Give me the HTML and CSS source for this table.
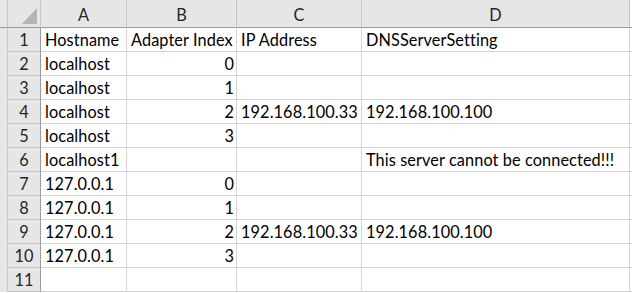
FILE: index.html
```html
<!DOCTYPE html>
<html lang="en">
<head>
    <meta charset="UTF-8">
    <title>Sheet1</title>
    <link rel="stylesheet" href="styles.css">
</head>
<body>
    <div class="sheet">
        <!-- column headers -->
        <div class="cell strip head"></div>
        <div class="cell corner head"><span class="corner-mark"></span></div>
        <div class="cell col-head">A</div>
        <div class="cell col-head">B</div>
        <div class="cell col-head">C</div>
        <div class="cell col-head">D</div>
        <div class="cell rest head"></div>

        <div class="cell strip"></div><div class="cell row-head">1</div>
        <div class="cell">Hostname</div><div class="cell">Adapter Index</div><div class="cell">IP Address</div><div class="cell">DNSServerSetting</div><div class="cell rest"></div>

        <div class="cell strip"></div><div class="cell row-head">2</div>
        <div class="cell">localhost</div><div class="cell num">0</div><div class="cell"></div><div class="cell"></div><div class="cell rest"></div>

        <div class="cell strip"></div><div class="cell row-head">3</div>
        <div class="cell">localhost</div><div class="cell num">1</div><div class="cell"></div><div class="cell"></div><div class="cell rest"></div>

        <div class="cell strip"></div><div class="cell row-head">4</div>
        <div class="cell">localhost</div><div class="cell num">2</div><div class="cell">192.168.100.33</div><div class="cell">192.168.100.100</div><div class="cell rest"></div>

        <div class="cell strip"></div><div class="cell row-head">5</div>
        <div class="cell">localhost</div><div class="cell num">3</div><div class="cell"></div><div class="cell"></div><div class="cell rest"></div>

        <div class="cell strip"></div><div class="cell row-head">6</div>
        <div class="cell">localhost1</div><div class="cell num"></div><div class="cell"></div><div class="cell">This server cannot be connected!!!</div><div class="cell rest"></div>

        <div class="cell strip"></div><div class="cell row-head">7</div>
        <div class="cell">127.0.0.1</div><div class="cell num">0</div><div class="cell"></div><div class="cell"></div><div class="cell rest"></div>

        <div class="cell strip"></div><div class="cell row-head">8</div>
        <div class="cell">127.0.0.1</div><div class="cell num">1</div><div class="cell"></div><div class="cell"></div><div class="cell rest"></div>

        <div class="cell strip"></div><div class="cell row-head">9</div>
        <div class="cell">127.0.0.1</div><div class="cell num">2</div><div class="cell">192.168.100.33</div><div class="cell">192.168.100.100</div><div class="cell rest"></div>

        <div class="cell strip"></div><div class="cell row-head">10</div>
        <div class="cell">127.0.0.1</div><div class="cell num">3</div><div class="cell"></div><div class="cell"></div><div class="cell rest"></div>

        <div class="cell strip"></div><div class="cell row-head">11</div>
        <div class="cell"></div><div class="cell num"></div><div class="cell"></div><div class="cell"></div><div class="cell rest"></div>
    </div>
</body>
</html>
```

FILE: styles.css
```css
body {
    margin: 0;
    background: #ffffff;
    font-family: Lato, "Open Sans", sans-serif;
    font-size: 16.3px;
    letter-spacing: 0.1px;
    color: #000000;
}

.sheet {
    display: grid;
    grid-template-columns: 8px 33px 86px 110px 125px 268px 2px;
    grid-template-rows: 28px repeat(11, 24px);
}

.cell {
    box-sizing: border-box;
    border-right: 1px solid #d4d4d4;
    border-bottom: 1px solid #d4d4d4;
    display: flex;
    align-items: flex-end;
    padding: 0 2px 1px 4px;
    line-height: 20px;
    white-space: nowrap;
    overflow: visible;
}

.num {
    justify-content: flex-end;
}

.strip {
    background: #e6e6e6;
    border-right-color: #c6c6c6;
    border-bottom-color: #e6e6e6;
    padding: 0;
}

.head {
    border-bottom-color: #9b9b9b;
}

.corner {
    background: #e6e6e6;
    border-right-color: #c6c6c6;
    border-bottom-color: #9b9b9b;
    padding: 0 3px 3px 0;
    justify-content: flex-end;
}

.corner-mark {
    width: 15px;
    height: 16px;
    background: #b4b4b4;
    clip-path: polygon(100% 0, 100% 100%, 0 100%);
}

.col-head {
    background: #e6e6e6;
    border-right-color: #c6c6c6;
    border-bottom-color: #9b9b9b;
    justify-content: center;
    align-items: center;
    padding: 2px 0 0 0;
    color: #262626;
}

.row-head {
    background: #e6e6e6;
    border-right-color: #9b9b9b;
    border-bottom-color: #c6c6c6;
    justify-content: center;
    align-items: center;
    padding: 1px 0 0 0;
    color: #262626;
}

.rest {
    border-right: none;
    padding: 0;
}
```
